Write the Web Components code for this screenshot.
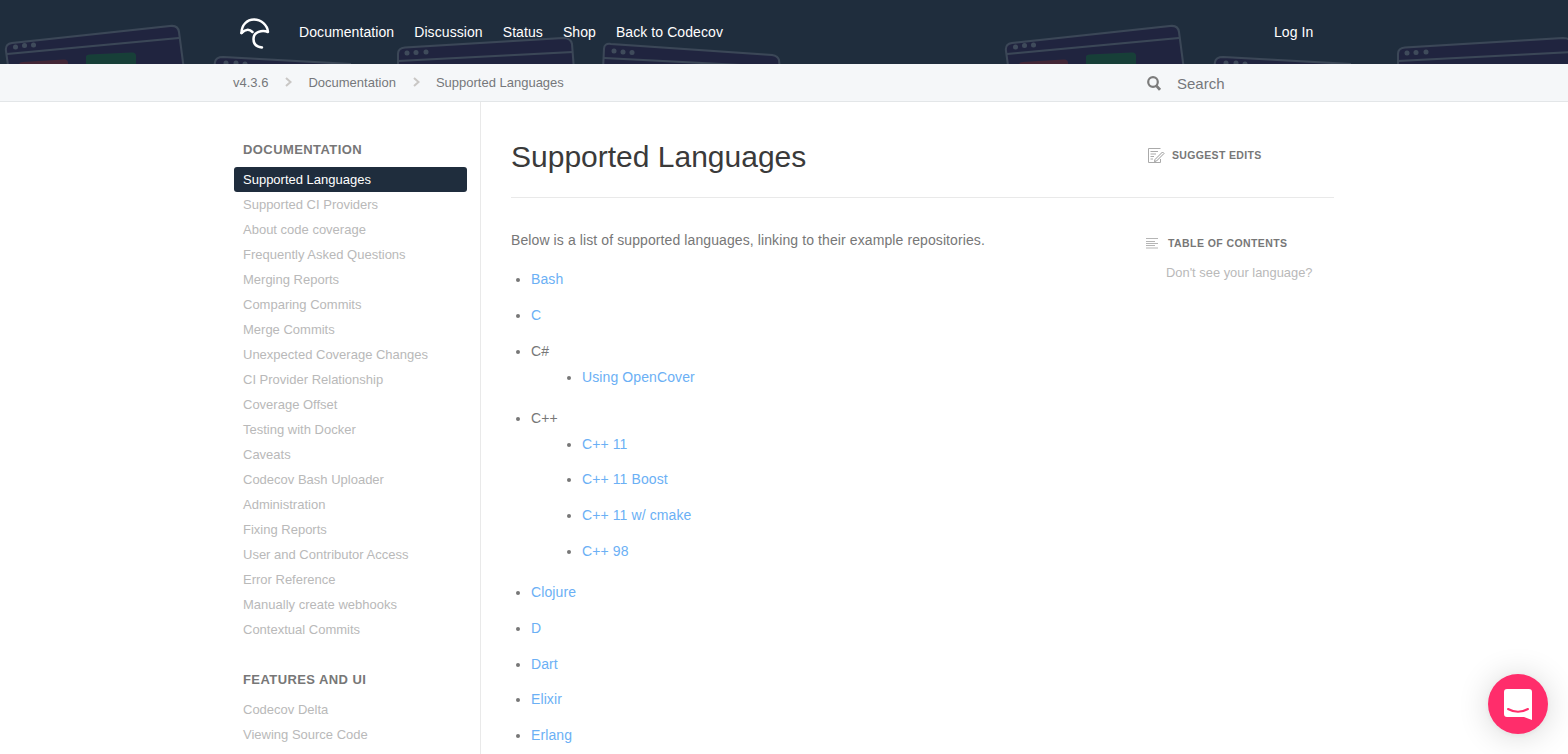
<!DOCTYPE html>
<html>
<head>
<meta charset="utf-8">
<title>Supported Languages</title>
<style>
html, body { margin: 0; height: 100%; overflow: hidden; background: #fff; }
body { font-family: "Liberation Sans", Arial, sans-serif; }
</style>
</head>
<body>
<docs-page>
	<docs-header slot="header">
		<a href="#">Documentation</a>
		<a href="#">Discussion</a>
		<a href="#">Status</a>
		<a href="#">Shop</a>
		<a href="#">Back to Codecov</a>
	</docs-header>
	<docs-subnav slot="subnav"></docs-subnav>
	<docs-sidebar slot="sidebar">
		<side-group title="Documentation">
			<side-link active>Supported Languages</side-link>
			<side-link>Supported CI Providers</side-link>
			<side-link>About code coverage</side-link>
			<side-link>Frequently Asked Questions</side-link>
			<side-link>Merging Reports</side-link>
			<side-link>Comparing Commits</side-link>
			<side-link>Merge Commits</side-link>
			<side-link>Unexpected Coverage Changes</side-link>
			<side-link>CI Provider Relationship</side-link>
			<side-link>Coverage Offset</side-link>
			<side-link>Testing with Docker</side-link>
			<side-link>Caveats</side-link>
			<side-link>Codecov Bash Uploader</side-link>
			<side-link>Administration</side-link>
			<side-link>Fixing Reports</side-link>
			<side-link>User and Contributor Access</side-link>
			<side-link>Error Reference</side-link>
			<side-link>Manually create webhooks</side-link>
			<side-link>Contextual Commits</side-link>
		</side-group>
		<side-group title="Features and UI">
			<side-link>Codecov Delta</side-link>
			<side-link>Viewing Source Code</side-link>
		</side-group>
	</docs-sidebar>
	<docs-article slot="main" title="Supported Languages"></docs-article>
</docs-page>
<chat-launcher></chat-launcher>

<script>
// Little helper so every component reads the same
function shadow(el, html) {
	el.attachShadow({ mode: 'open' });
	const template = document.createElement('template');
	template.innerHTML = html;
	el.shadowRoot.appendChild(template.content.cloneNode(true));
}

class DocsPage extends HTMLElement {
	constructor() {
		super();
		shadow(this, `
<style>
:host { display: flex; flex-direction: column; height: 100vh; overflow: hidden; }
.body { flex: 1; display: flex; min-height: 0; padding-left: 233px; overflow: hidden; }
</style>
<slot name="header"></slot>
<slot name="subnav"></slot>
<div class="body">
	<slot name="sidebar"></slot>
	<slot name="main"></slot>
</div>`);
	}
}

// One tile of the header artwork, repeats every 1000px
const HEADER_TILE = `
<pattern id="tile" x="0" y="0" width="1000" height="64" patternUnits="userSpaceOnUse">
	<g stroke="#3b4757" stroke-width="2">
		<path d="M6 51 Q5 44 12 43 L170 26 Q178 25 179 32 L184 70 L10 80Z" fill="#20243f"/>
		<path d="M7 54 L179 38" fill="none"/>
		<path d="M214 70 L215 62 Q216 57 223 57 L350 64 L350 70Z" fill="#20243f"/>
		<path d="M398 70 L398 54 Q398 48 405 47.500 L563 38 Q571 38 572 44 L574 70Z" fill="#20243f"/>
		<path d="M398 61 L573 52" fill="none"/>
		<path d="M603 70 L604 49 Q604 43 611 44 L772 55 Q778 56 779 60 L780 70Z" fill="#20243f"/>
		<path d="M604 58 L780 67" fill="none"/>
	</g>
	<path d="M19 65 Q19 62 23 62 L64 59.500 Q68 59.500 68 63 L68 70 L19 70Z" fill="#422636"/>
	<path d="M86 57 Q86 54.500 90 54.500 L132 52.500 Q136 52.500 136 56 L136 70 L86 70Z" fill="#173f38"/>
	<g fill="#3f4b5b">
		<circle cx="15.500" cy="47" r="2.500"/><circle cx="24.500" cy="45.500" r="2.500"/><circle cx="33.500" cy="45" r="2.500"/>
		<circle cx="226" cy="63" r="2.500"/><circle cx="236" cy="63" r="2.500"/><circle cx="245" cy="64" r="2.500"/>
		<circle cx="407" cy="53" r="2.500"/><circle cx="416" cy="52.500" r="2.500"/><circle cx="426" cy="52" r="2.500"/>
		<circle cx="614" cy="51" r="2.500"/><circle cx="623" cy="52" r="2.500"/><circle cx="632" cy="52.500" r="2.500"/>
	</g>
</pattern>`;

class DocsHeader extends HTMLElement {
	constructor() {
		super();
		shadow(this, `
<style>
:host { display: block; position: relative; height: 64px; background: #1f2d3d; flex: none; overflow: hidden; }
.art { position: absolute; left: 0; top: 0; width: 100%; height: 64px; }
.bar { position: relative; display: flex; align-items: center; height: 64px; padding-left: 225px; box-sizing: border-box; }
.logo { display: block; width: 60px; height: 45px; margin: 0 14px 0 0; flex: none; }
nav { display: flex; gap: 20px; position: relative; top: 0; }
::slotted(a) { color: #fff; font: 14px/20px "Liberation Sans", Arial, sans-serif; letter-spacing: .08px; text-decoration: none; }
.login { position: absolute; left: 1274px; top: 22px; color: #fff; font: 14px/20px "Liberation Sans", Arial, sans-serif; letter-spacing: .08px; text-decoration: none; }
</style>
<svg class="art" aria-hidden="true"><defs>${HEADER_TILE}</defs><rect width="100%" height="64" fill="url(#tile)"/></svg>
<div class="bar">
	<svg class="logo" viewBox="0 0 60 45" fill="none" stroke="#fff" stroke-width="2.500" stroke-linecap="round" stroke-linejoin="round">
		<path d="M16.500 23 C16.500 15 22 9.500 29 9.500 C36 9.500 42.500 15 43 22 C37 19.500 28.500 22 28.500 29 C28.500 34 32 37 37 37.500"/>
		<path d="M16.500 23 C20 19.500 24 18.500 27.500 22"/>
	</svg>
	<nav><slot></slot></nav>
	<a class="login" href="#">Log In</a>
</div>`);
	}
}

class DocsSubnav extends HTMLElement {
	constructor() {
		super();
		const chevron = '<svg class="chev" width="8" height="10" viewBox="0 0 8 10" fill="none" stroke="#c9c7c5" stroke-width="2"><path d="M2 1 L6.500 5 L2 9"/></svg>';
		shadow(this, `
<style>
:host { display: block; position: relative; flex: none; height: 38px; box-sizing: border-box; background: #f5f7f9; border-bottom: 1px solid #e3e6e8; color: #76777b; font-size: 13px; }
.crumbs { display: flex; align-items: center; height: 37px; padding: 0 0 1px 233px; box-sizing: border-box; }
.chev { margin: 0 16px; }
.search { position: absolute; left: 1147px; top: 1px; height: 37px; display: flex; align-items: center; color: #76777b; font-size: 15px; }
.search svg { margin: -1px 16px 0 0; }
</style>
<div class="crumbs"><span>v4.3.6</span>${chevron}<span>Documentation</span>${chevron}<span>Supported Languages</span></div>
<div class="search">
	<svg width="14" height="15" viewBox="0 0 14 15" fill="none" stroke="#7c7c7c" stroke-width="2.200"><circle cx="6" cy="6" r="4.800"/><path d="M9.500 9.800 L13 13.800" stroke-width="2.800"/></svg>
	<span>Search</span>
</div>`);
	}
}

class DocsSidebar extends HTMLElement {
	constructor() {
		super();
		shadow(this, `
<style>
:host { display: block; width: 248px; box-sizing: border-box; flex: none; border-right: 1px solid #e9e9e9; padding: 37px 13px 0 1px; overflow: hidden; }
</style>
<slot></slot>`);
	}
}

class SideGroup extends HTMLElement {
	constructor() {
		super();
		shadow(this, `
<style>
:host { display: block; margin-bottom: 27px; }
h3 { margin: 0 0 7px; padding: 1px 0 0 9px; font: bold 13px/20px "Liberation Sans", Arial, sans-serif; letter-spacing: .42px; color: #777; text-transform: uppercase; }
</style>
<h3>${this.getAttribute('title')}</h3>
<slot></slot>`);
	}
}

class SideLink extends HTMLElement {
	constructor() {
		super();
		shadow(this, `
<style>
:host { display: block; height: 25px; padding-left: 9px; border-radius: 3px; font-size: 13px; line-height: 25px; color: #b9b9b9; white-space: nowrap; }
:host([active]) { background: #1f2d3d; color: #fff; }
</style>
<slot></slot>`);
	}
}

class ListLink extends HTMLElement {
	constructor() {
		super();
		shadow(this, `
<style>
:host { color: #6bb0f5; }
</style>
<slot></slot>`);
	}
}

class DocsArticle extends HTMLElement {
	constructor() {
		super();
		shadow(this, `
<style>
:host { display: block; flex: 1; min-width: 0; padding: 0 0 0 30px; color: #777; font-size: 14px; line-height: 21px; position: relative; overflow: hidden; }
.head { width: 823px; height: 96px; box-sizing: border-box; display: flex; justify-content: space-between; border-bottom: 1px solid #e9e9e9; }
h1 { margin: 37px 0 0; font: 30px/36px "Liberation Sans", Arial, sans-serif; color: #3a3a3a; }
.suggest { display: flex; align-items: center; gap: 7px; width: 187px; height: 20px; margin-top: 43px; font: bold 10.500px/20px "Liberation Sans", Arial, sans-serif; letter-spacing: .33px; color: #777; text-transform: uppercase; }
.cols { display: flex; }
.content { width: 635px; padding-top: 32.300px; letter-spacing: .1px; }
p { margin: 0 0 18px; }
ul { margin: 0; padding: 0 0 0 20px; }
li { margin-bottom: 14.700px; }
ul ul { margin: 5px 0 20px; padding-left: 51px; list-style-type: disc; }
ul ul.last { margin-bottom: 20.700px; }
aside { margin-left: 0; padding-top: 35px; }
.toc-title { display: flex; align-items: center; gap: 9px; font: bold 10.500px/20px "Liberation Sans", Arial, sans-serif; letter-spacing: .42px; color: #777; text-transform: uppercase; }
.toc-item { margin: 10px 0 0 20px; font-size: 12.900px; line-height: 20px; color: #b9b9b9; white-space: nowrap; }
</style>
<div class="head">
	<h1>${this.getAttribute('title')}</h1>
	<div class="suggest">
		<svg width="18" height="17" viewBox="0 0 18 17" fill="none" stroke="#aaa"><path d="M13.500 1.500 H1.500 V15.500 H13.500 V12"/><path d="M3.500 4.500 H11 M3.500 7 H9 M3.500 9.500 H7 M3.500 12 H6"/><path d="M8 12.500 L15.500 5 L17 6.500 L9.500 14 L7.500 14.500Z" stroke="#999"/></svg>
		<span>Suggest Edits</span>
	</div>
</div>
<div class="cols">
	<div class="content">
		<p>Below is a list of supported languages, linking to their example repositories.</p>
		<ul>
			<li><list-link>Bash</list-link></li>
			<li><list-link>C</list-link></li>
			<li>C#
				<ul><li><list-link>Using OpenCover</list-link></li></ul>
			</li>
			<li>C++
				<ul class="last">
					<li><list-link>C++ 11</list-link></li>
					<li><list-link>C++ 11 Boost</list-link></li>
					<li><list-link>C++ 11 w/ cmake</list-link></li>
					<li><list-link>C++ 98</list-link></li>
				</ul>
			</li>
			<li><list-link>Clojure</list-link></li>
			<li><list-link>D</list-link></li>
			<li><list-link>Dart</list-link></li>
			<li><list-link>Elixir</list-link></li>
			<li><list-link>Erlang</list-link></li>
		</ul>
	</div>
	<aside>
		<div class="toc-title">
			<svg width="13" height="11" viewBox="0 0 13 11" stroke="#b5b5b5" fill="none"><path d="M0 .500 H12 M0 3.500 H9 M0 5.500 H12 M0 7.500 H9 M0 10 H12" /></svg>
			<span>Table of Contents</span>
		</div>
		<div class="toc-item">Don't see your language?</div>
	</aside>
</div>`);
	}
}

class ChatLauncher extends HTMLElement {
	constructor() {
		super();
		shadow(this, `
<style>
:host { position: fixed; right: 20px; bottom: 20px; width: 60px; height: 60px; border-radius: 50%; background: #ff2d6b; box-shadow: 0 1px 6px rgba(0,0,0,.06), 0 2px 32px rgba(0,0,0,.16); display: flex; align-items: center; justify-content: center; }
svg { display: block; }
</style>
<svg width="28" height="32" viewBox="0 0 28 32">
	<path d="M3 1 H25 Q28 1 28 4 V32 L20 29 H3 Q0 29 0 26 V4 Q0 1 3 1Z" fill="#fff"/>
	<path d="M4 21 Q14 26.500 24 21" fill="none" stroke="#ff2d6b" stroke-width="2" stroke-linecap="round"/>
</svg>`);
	}
}

customElements.define('docs-page', DocsPage);
customElements.define('docs-header', DocsHeader);
customElements.define('docs-subnav', DocsSubnav);
customElements.define('docs-sidebar', DocsSidebar);
customElements.define('side-group', SideGroup);
customElements.define('side-link', SideLink);
customElements.define('list-link', ListLink);
customElements.define('docs-article', DocsArticle);
customElements.define('chat-launcher', ChatLauncher);
</script>
</body>
</html>
